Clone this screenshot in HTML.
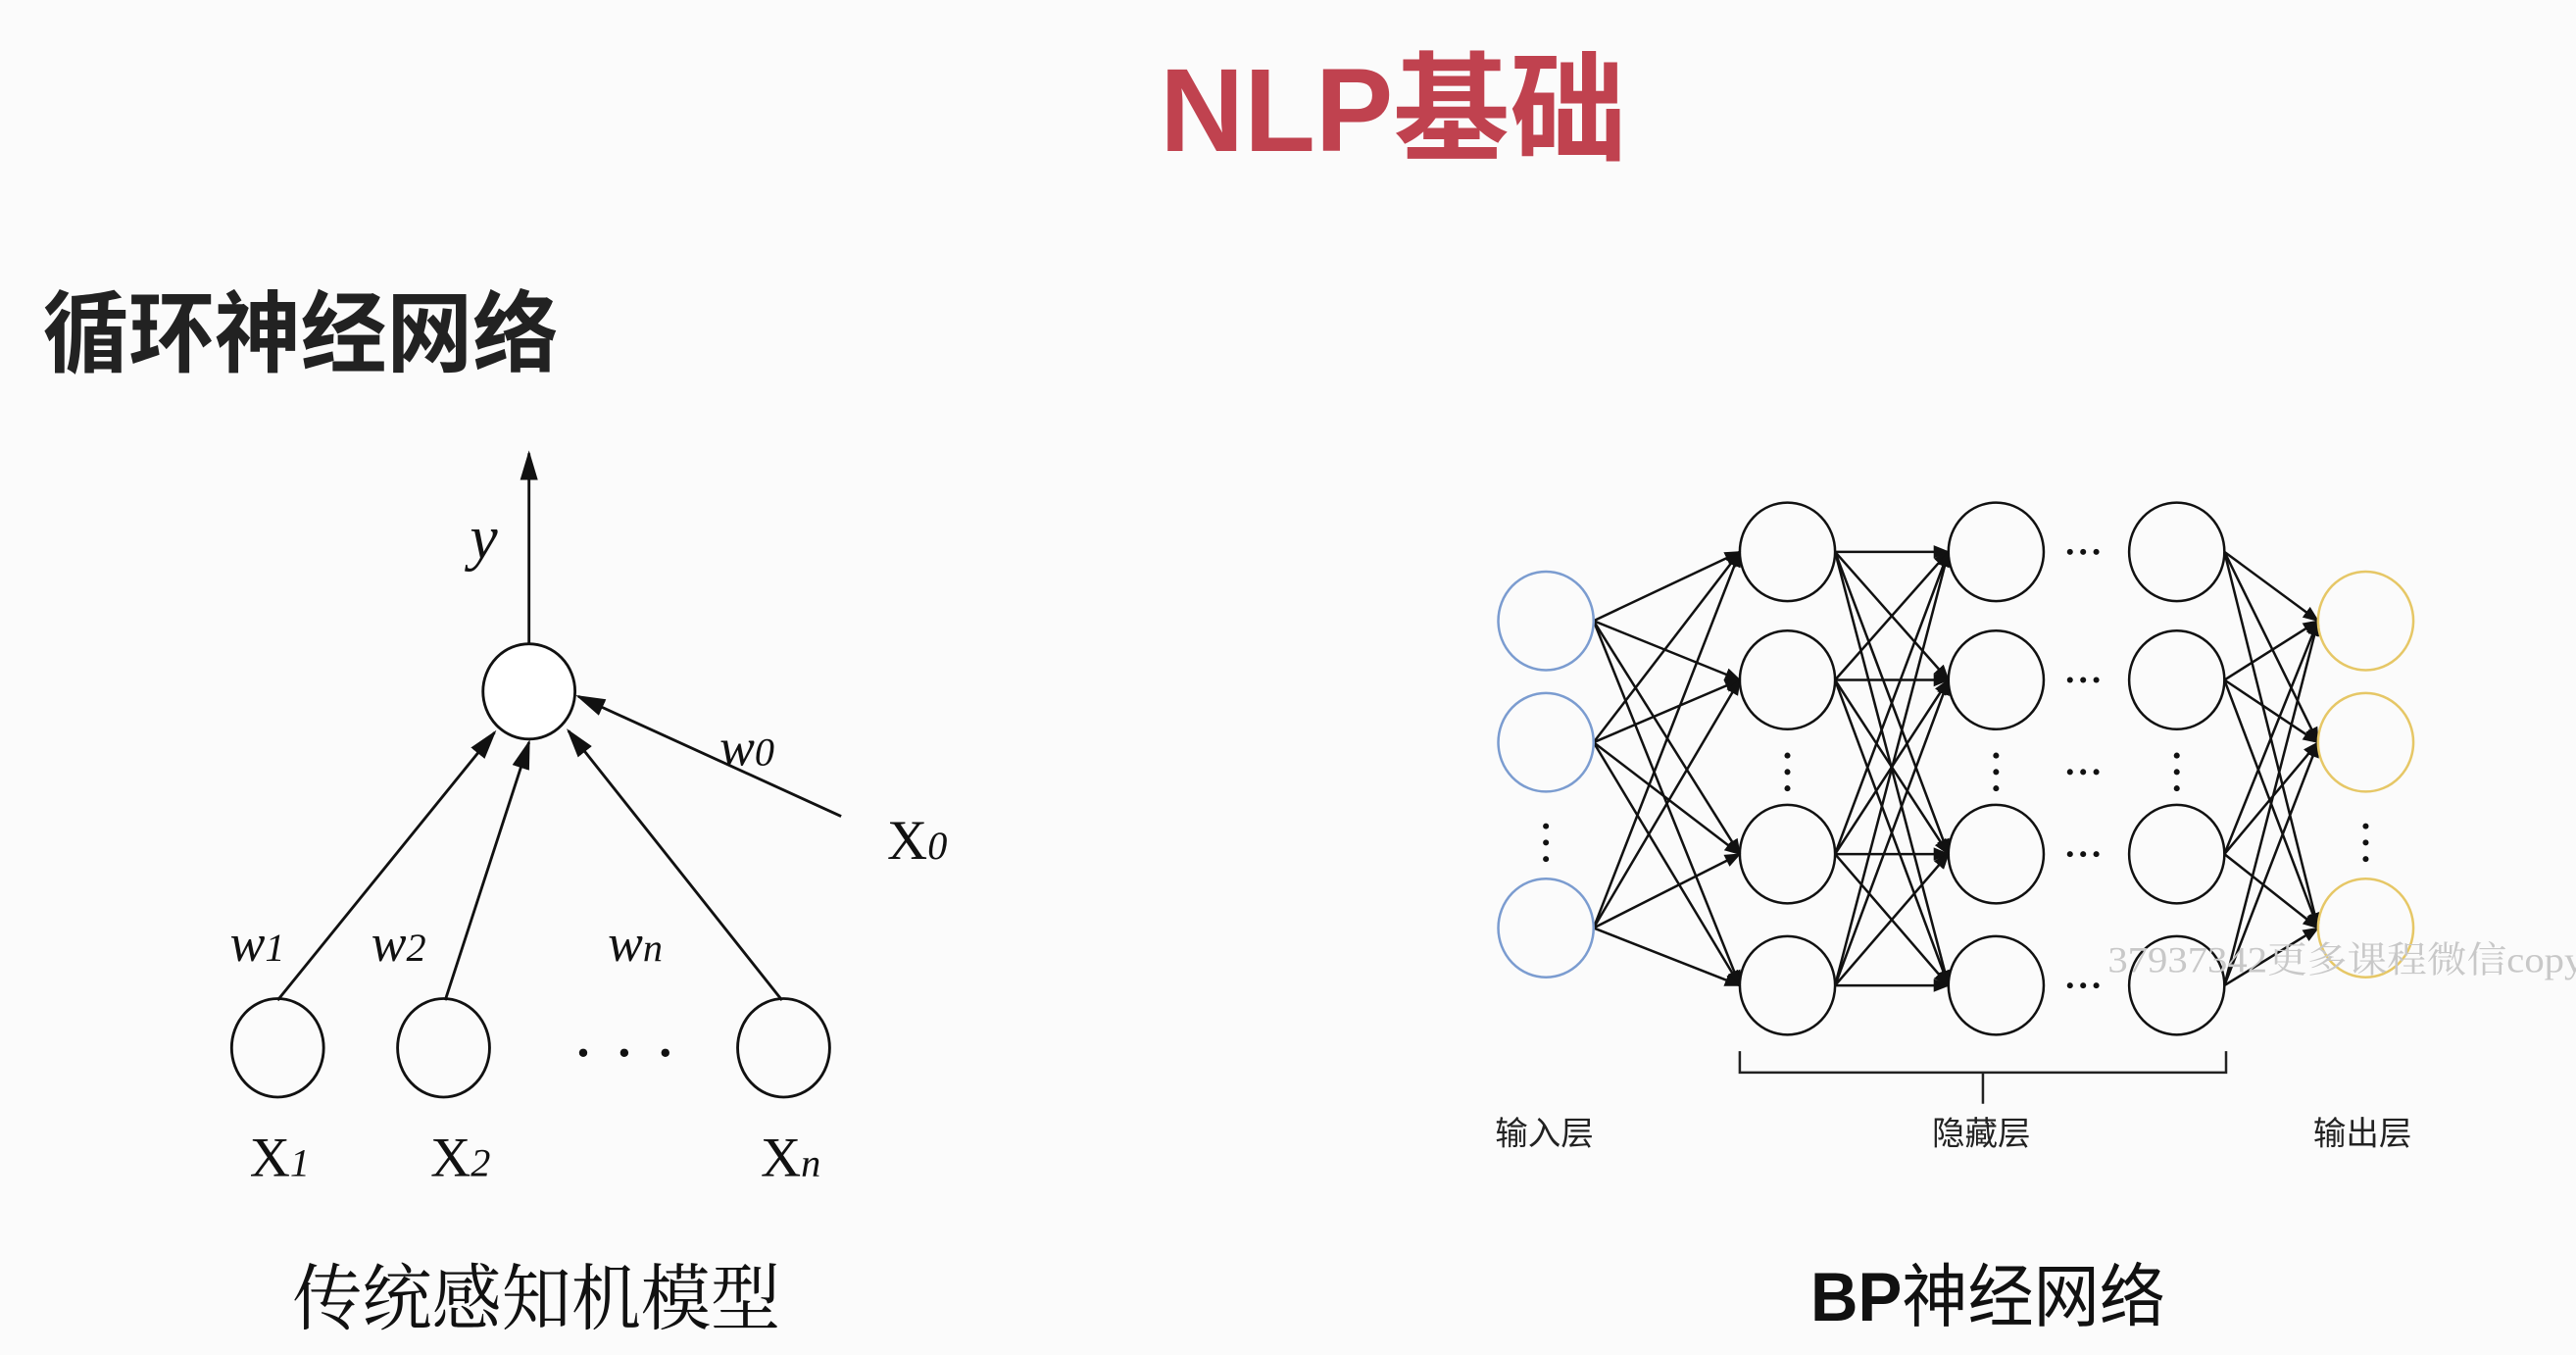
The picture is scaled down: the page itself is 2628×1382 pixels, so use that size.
<!DOCTYPE html>
<html><head><meta charset="utf-8"><style>
html,body{margin:0;padding:0;background:#fbfbfb;}
svg{display:block}
</style></head><body>
<svg id="s" width="2628" height="1382" viewBox="0 0 1568 825" preserveAspectRatio="none" xmlns="http://www.w3.org/2000/svg">
<defs>
<marker id="a" viewBox="0 0 10 10" refX="9" refY="5" markerWidth="10" markerHeight="10" markerUnits="userSpaceOnUse" orient="auto"><path d="M0,1 L10,5 L0,9 z" fill="#111"/></marker>
<marker id="b" viewBox="0 0 10 10" refX="9" refY="5" markerWidth="18" markerHeight="18" markerUnits="userSpaceOnUse" orient="auto"><path d="M0,2 L10,5 L0,8 z" fill="#111"/></marker>
</defs>
<rect width="1568" height="825" fill="#fbfbfb"/>
<text x="706" y="92" textLength="284" lengthAdjust="spacingAndGlyphs" font-family="Liberation Sans, Noto Sans CJK SC, sans-serif" font-weight="bold" font-size="72" fill="#c0424f">NLP基础</text>
<text x="26" y="222" textLength="314" lengthAdjust="spacingAndGlyphs" font-family="Liberation Sans, Noto Sans CJK SC, sans-serif" font-weight="bold" font-size="54" fill="#222">循环神经网络</text>
<g stroke="#111" stroke-width="1.7" fill="none">
<line x1="322" y1="392" x2="322" y2="276" marker-end="url(#b)"/>
<ellipse cx="322" cy="421" rx="28" ry="29" fill="#fff"/>
<ellipse cx="169" cy="638" rx="28" ry="30"/>
<ellipse cx="270" cy="638" rx="28" ry="30"/>
<ellipse cx="477" cy="638" rx="28" ry="30"/>
<line x1="169" y1="609" x2="301" y2="446" marker-end="url(#b)"/>
<line x1="271" y1="609" x2="322" y2="452" marker-end="url(#b)"/>
<line x1="476" y1="609" x2="346" y2="445" marker-end="url(#b)"/>
<line x1="512" y1="497" x2="352" y2="424" marker-end="url(#b)"/>
</g>
<g fill="#111"><circle cx="355" cy="641" r="2.5"/><circle cx="380" cy="641" r="2.5"/><circle cx="405" cy="641" r="2.5"/></g>
<g font-family="Liberation Serif, serif" font-size="34" fill="#111">
<text x="286" y="340" font-style="italic" font-size="38">y</text>
<text x="438" y="466" font-style="italic" font-size="32">w<tspan font-size="24">0</tspan></text>
<text x="140" y="585" font-style="italic" font-size="32">w<tspan font-size="24">1</tspan></text>
<text x="226" y="585" font-style="italic" font-size="32">w<tspan font-size="24">2</tspan></text>
<text x="370" y="585" font-style="italic" font-size="32">w<tspan font-size="24">n</tspan></text>
<text x="540" y="523">X<tspan font-style="italic" font-size="24">0</tspan></text>
<text x="152" y="716">X<tspan font-style="italic" font-size="24">1</tspan></text>
<text x="262" y="716">X<tspan font-style="italic" font-size="24">2</tspan></text>
<text x="463" y="716">X<tspan font-style="italic" font-size="24">n</tspan></text>
</g>
<text x="178" y="806" textLength="297" lengthAdjust="spacingAndGlyphs" font-family="Liberation Serif, Noto Serif CJK SC, serif" font-size="44" fill="#111">传统感知机模型</text>
<g id="net" stroke="#111" stroke-width="1.5" fill="none"></g>
<g font-family="Liberation Sans, Noto Sans CJK SC, sans-serif" font-size="20" fill="#222" text-anchor="middle">
<text x="940" y="697">输入层</text><text x="1206" y="697">隐藏层</text><text x="1438" y="697">输出层</text>
</g>
<path d="M1059,640 V653 H1355 V640 M1207,653 V672" stroke="#222" stroke-width="1.5" fill="none"/>
<text x="1102" y="804" textLength="216" lengthAdjust="spacingAndGlyphs" font-family="Liberation Sans, Noto Sans CJK SC, sans-serif" font-size="42" fill="#111"><tspan font-weight="bold">BP</tspan>神经网络</text>
<text x="1283" y="592" textLength="290" lengthAdjust="spacingAndGlyphs" font-family="Liberation Serif, Noto Serif CJK SC, serif" font-size="22" fill="#c8c8c8">37937342更多课程微信copy</text>
</svg>
<script>
var g=document.getElementById('net'),NS='http://www.w3.org/2000/svg';
function el(t,a){var e=document.createElementNS(NS,t);for(var k in a)e.setAttribute(k,a[k]);g.appendChild(e);return e;}
var inp=[378,452,565],hid=[336,414,520,600],R=29;
function conn(x1,ys1,x2,ys2){ys1.forEach(function(a){ys2.forEach(function(b){el('line',{x1:x1+R,y1:a,x2:x2-R,y2:b,'marker-end':'url(#a)'});});});}
conn(941,inp,1088,hid);conn(1088,hid,1215,hid);conn(1325,hid,1440,inp);
inp.forEach(function(y){el('ellipse',{cx:941,cy:y,rx:R,ry:30,stroke:'#7b9cd0',fill:'none'});el('ellipse',{cx:1440,cy:y,rx:R,ry:30,stroke:'#e6c766',fill:'none'});});
[1088,1215,1325].forEach(function(x){hid.forEach(function(y){el('ellipse',{cx:x,cy:y,rx:R,ry:30,fill:'none'});});
[460,470,480].forEach(function(y){el('circle',{cx:x,cy:y,r:1.8,fill:'#111',stroke:'none'});});});
[941,1440].forEach(function(x){[503,513,523].forEach(function(y){el('circle',{cx:x,cy:y,r:1.8,fill:'#111',stroke:'none'});});});
hid.concat([470]).forEach(function(y){[1260,1268,1276].forEach(function(x){el('circle',{cx:x,cy:y,r:1.8,fill:'#111',stroke:'none'});});});
</script>
</body></html>
